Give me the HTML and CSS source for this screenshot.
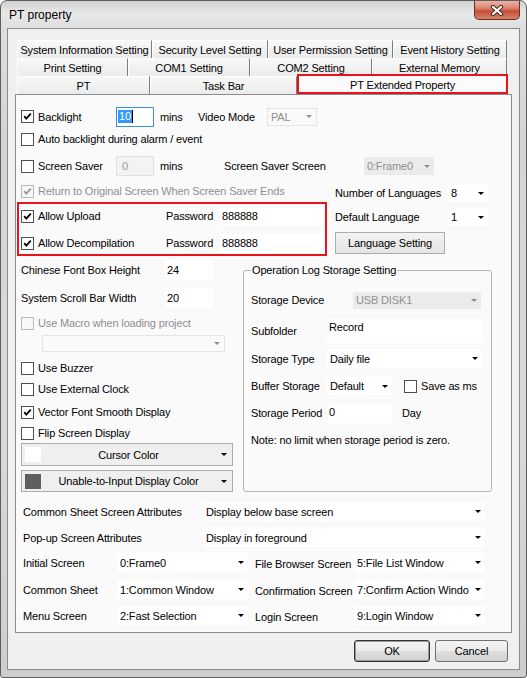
FILE: index.html
```html
<!DOCTYPE html>
<html>
<head>
<meta charset="utf-8">
<title>PT property</title>
<link rel="stylesheet" href="styles.css">
</head>
<body>
<div class="window">
  <div class="titlebar">
    <span class="title">PT property</span>
    <div class="close">
      <svg width="14" height="11" viewBox="0 0 14 11"><path d="M3 2 L11 9 M11 2 L3 9" stroke="#4a2a24" stroke-width="4.2" stroke-linecap="round"/><path d="M3 2 L11 9 M11 2 L3 9" stroke="#ffffff" stroke-width="2.2" stroke-linecap="round"/></svg>
    </div>
  </div>
  <div class="client">
    <div class="tabs">
      <div class="tabrow">
        <div class="tab w135">System Information Setting</div>
        <div class="tab w116">Security Level Setting</div>
        <div class="tab w125">User Permission Setting</div>
        <div class="tab w114">Event History Setting</div>
      </div>
      <div class="tabrow">
        <div class="tab w111">Print Setting</div>
        <div class="tab w122">COM1 Setting</div>
        <div class="tab w122">COM2 Setting</div>
        <div class="tab w135">External Memory</div>
      </div>
      <div class="tabrow last">
        <div class="tab w133">PT</div>
        <div class="tab w147">Task Bar</div>
        <div class="tab active w211">PT Extended Property</div>
      </div>
    </div>

    <div class="page">
      <div class="top">
        <div class="row pl5 h21">
          <label class="chk w95"><span class="box"><svg class="tick" viewBox="0 0 11 11"><path d="M2.2 5.2 L4.3 7.6 L8.8 2.6"/></svg></span>Backlight</label>
          <span class="field focus w38 h20"><span class="sel">10</span><span class="caret"></span></span>
          <span class="ml6 w38">mins</span>
          <span class="w69">Video Mode</span>
          <span class="combo ghost w50 h18"><span class="val">PAL</span></span>
        </div>
        <div class="row pl5 h22 mt1">
          <label class="chk"><span class="box"></span>Auto backlight during alarm / event</label>
        </div>
        <div class="row pl5 h20 mt6">
          <label class="chk w95"><span class="box"></span>Screen Saver</label>
          <span class="field off w38 h20">0</span>
          <span class="ml6 w64">mins</span>
          <span class="w140">Screen Saver Screen</span>
          <span class="combo off w70 h18"><span class="val">0:Frame0</span></span>
        </div>
        <div class="split mt5">
          <div class="leftcol">
            <div class="row pl5 h20">
              <label class="chk dis"><span class="box dis"><svg class="tick" viewBox="0 0 11 11"><path d="M2.2 5.2 L4.3 7.6 L8.8 2.6"/></svg></span>Return to Original Screen When Screen Saver Ends</label>
            </div>
            <div class="redbox">
              <div class="row h20 mt2">
                <label class="chk w145"><span class="box"><svg class="tick" viewBox="0 0 11 11"><path d="M2.2 5.2 L4.3 7.6 L8.8 2.6"/></svg></span>Allow Upload</label>
                <span class="w54">Password</span>
                <span class="field w103 h19">888888</span>
              </div>
              <div class="row h20 mt7">
                <label class="chk w145"><span class="box"><svg class="tick" viewBox="0 0 11 11"><path d="M2.2 5.2 L4.3 7.6 L8.8 2.6"/></svg></span>Allow Decompilation</label>
                <span class="w54">Password</span>
                <span class="field w103 h19">888888</span>
              </div>
            </div>
          </div>
          <div class="rightcol">
            <div class="row h18">
              <span class="w113">Number of Languages</span>
              <span class="combo w40 h17"><span class="val">8</span></span>
            </div>
            <div class="row h18 mt6">
              <span class="w113">Default Language</span>
              <span class="combo w40 h17"><span class="val">1</span></span>
            </div>
            <div class="pushbtn w110 h22 mt6">Language Setting</div>
          </div>
        </div>
      </div>

      <div class="mid">
        <div class="midleft">
          <div class="row h20">
            <span class="w144">Chinese Font Box Height</span>
            <span class="field w48 h20">24</span>
          </div>
          <div class="row h20 mt8">
            <span class="w144">System Scroll Bar Width</span>
            <span class="field w48 h20">20</span>
          </div>
          <div class="row h18 mt6">
            <label class="chk dis"><span class="box dis"></span>Use Macro when loading project</label>
          </div>
          <div class="combo ghost2 w183 h17 mt3 ml21"><span class="val"></span></div>
          <div class="row h18 mt7">
            <label class="chk"><span class="box"></span>Use Buzzer</label>
          </div>
          <div class="row h18 mt3">
            <label class="chk"><span class="box"></span>Use External Clock</label>
          </div>
          <div class="row h18 mt5">
            <label class="chk"><span class="box"><svg class="tick" viewBox="0 0 11 11"><path d="M2.2 5.2 L4.3 7.6 L8.8 2.6"/></svg></span>Vector Font Smooth Display</label>
          </div>
          <div class="row h18 mt3">
            <label class="chk"><span class="box"></span>Flip Screen Display</label>
          </div>
          <div class="colorbtn h23 mt1"><span class="swatch white"></span><span class="clabel">Cursor Color</span></div>
          <div class="colorbtn h22 mt4"><span class="swatch gray"></span><span class="clabel">Unable-to-Input Display Color</span></div>
        </div>

        <fieldset class="group">
          <legend>Operation Log Storage Setting</legend>
          <div class="row h18 mt14">
            <span class="w102">Storage Device</span>
            <span class="combo off w128 h17"><span class="val">USB DISK1</span></span>
          </div>
          <div class="row h24 mt10">
            <span class="w76">Subfolder</span>
            <span class="field top w156 h24">Record</span>
          </div>
          <div class="row h19 mt6">
            <span class="w76">Storage Type</span>
            <span class="combo w155 h19"><span class="val">Daily file</span></span>
          </div>
          <div class="row h18 mt9">
            <span class="w76">Buffer Storage</span>
            <span class="combo w65 h18"><span class="val">Default</span></span>
            <label class="chk ml12"><span class="box"></span>Save as ms</label>
          </div>
          <div class="row h20 mt8">
            <span class="w76">Storage Period</span>
            <span class="field top w65 h19">0</span>
            <span class="ml10">Day</span>
          </div>
          <div class="note mt10">Note: no limit when storage period is zero.</div>
        </fieldset>
      </div>

      <div class="bottom">
        <div class="row h19">
          <span class="w180">Common Sheet Screen Attributes</span>
          <span class="combo w282 h19"><span class="val">Display below base screen</span></span>
        </div>
        <div class="row h19 mt7">
          <span class="w180">Pop-up Screen Attributes</span>
          <span class="combo w282 h19"><span class="val">Display in foreground</span></span>
        </div>
        <div class="row h19 mt6">
          <span class="w94">Initial Screen</span>
          <span class="combo w131 h19"><span class="val">0:Frame0</span></span>
          <span class="ml7 w99 low">File Browser Screen</span>
          <span class="combo w131 h19"><span class="val">5:File List Window</span></span>
        </div>
        <div class="row h19 mt8">
          <span class="w94">Common Sheet</span>
          <span class="combo w131 h19"><span class="val">1:Common Window</span></span>
          <span class="ml7 w99 low">Confirmation Screen</span>
          <span class="combo w131 h19"><span class="val">7:Confirm Action Windo</span></span>
        </div>
        <div class="row h19 mt7">
          <span class="w94">Menu Screen</span>
          <span class="combo w131 h19"><span class="val">2:Fast Selection</span></span>
          <span class="ml7 w99 low">Login Screen</span>
          <span class="combo w131 h19"><span class="val">9:Login Window</span></span>
        </div>
      </div>
    </div>

    <div class="actions">
      <div class="btn default w76">OK</div>
      <div class="btn w73">Cancel</div>
    </div>
  </div>
</div>
</body>
</html>
```

FILE: styles.css
```css
* { box-sizing: border-box; }
html, body { margin: 0; padding: 0; background: #ffffff; }
body {
  font-family: "Liberation Sans", Arial, sans-serif;
  font-size: 11px;
  letter-spacing: -0.15px;
  color: #000;
}

.window {
  width: 527px;
  height: 678px;
  border: 1px solid #5e5e5e;
  border-radius: 7px 7px 3px 3px;
  background: linear-gradient(180deg, #d2d2d2 0, #e7e7e7 12px, #dedede 28px, #d4d4d4 140px, #dadada 420px, #cdcdcd 100%);
  display: flex;
  flex-direction: column;
  overflow: hidden;
}

.titlebar {
  height: 27px;
  flex: none;
  display: flex;
  align-items: flex-start;
}
.title {
  font-size: 12px;
  letter-spacing: 0;
  line-height: 28px;
  padding-left: 8px;
}
.close {
  margin-left: auto;
  margin-right: 6px;
  width: 46px;
  height: 19px;
  border: 1px solid #6b2d25;
  border-top: none;
  border-radius: 0 0 5px 5px;
  background: linear-gradient(180deg, #eab4a6 0, #d9846f 40%, #c64f39 56%, #d5826a 100%);
  display: flex;
  align-items: center;
  justify-content: center;
}

.client {
  flex: none;
  height: 642px;
  margin: 0 6px;
  border: 1px solid #8b8b8b;
  background: #f0f0f0;
  padding: 11px 0 0 7px;
}

/* tabs */
.tabs { margin-left: 2px; width: 492px; }
.tabrow { display: flex; height: 18px; }
.tabrow.last { align-items: flex-end; }
.tab {
  height: 18px;
  flex: none;
  display: flex;
  align-items: center;
  justify-content: center;
  white-space: nowrap;
  background: linear-gradient(180deg, #f8f8f8, #ebebeb);
  border-top: 1px solid #ffffff;
  border-left: 1px solid #ffffff;
  border-right: 1px solid #7d7d7d;
  padding-top: 1px;
}
.tab.active {
  height: 20px;
  background: #fbfbfb;
  border: 2px solid #e8141a;
  position: relative;
  z-index: 1;
}

.page {
  width: 497px;
  height: 539px;
  border: 1px solid #898c95;
  background: #fafafa;
}

/* generic rows */
.row { display: flex; align-items: center; white-space: nowrap; }
.pl5 { padding-left: 5px; }
.top { padding-top: 11px; }

.chk { display: flex; align-items: center; gap: 4px; white-space: nowrap; }
.box {
  width: 13px;
  height: 13px;
  flex: none;
  border: 1px solid #4f4f4f;
  background: #ffffff;
  display: flex;
  align-items: center;
  justify-content: center;
}
.tick { width: 11px; height: 11px; }
.tick path { fill: none; stroke: #000; stroke-width: 1.8; }
.dis { color: #8f8f8f; }
.box.dis { border-color: #b9b9b9; background: #f7f7f7; }
.box.dis .tick path { stroke: #9a9a9a; }

.field {
  background: #ffffff;
  display: flex;
  align-items: center;
  padding-left: 2px;
  flex: none;
}
.field.top { align-items: flex-start; padding-top: 2px; }
.field.focus { border: 1px solid #3b8ee5; padding-left: 1px; }
.field.off { background: #f3f3f3; border: 1px solid #e1e1e1; color: #9a9a9a; padding-left: 5px; }
.sel { background: #3399ff; color: #ffffff; padding: 0 1px; line-height: 13px; }
.caret { width: 1px; height: 13px; background: #000; }

.combo {
  display: flex;
  align-items: center;
  flex: none;
  background: #ffffff;
  padding-left: 3px;
  white-space: nowrap;
}
.combo .val { flex: 1; min-width: 0; overflow: hidden; }
.combo::after {
  content: "";
  flex: none;
  margin: 0 4px 0 5px;
  border-left: 3px solid transparent;
  border-right: 3px solid transparent;
  border-top: 3px solid #000;
}
.combo.off { background: #ebebeb; color: #8f8f8f; }
.combo.off::after { border-top-color: #8f8f8f; }
.combo.ghost { background: transparent; border: 1px dotted #d4d4d4; color: #8f8f8f; }
.combo.ghost::after { border-top-color: #8f8f8f; }
.combo.ghost2 { background: transparent; border: 1px solid #e4e4e4; }
.combo.ghost2::after { border-top-color: #8f8f8f; }

.split { display: flex; align-items: flex-start; }
.leftcol { width: 311px; flex: none; }
.redbox {
  margin: 1px 0 0 1px;
  width: 310px;
  height: 54px;
  border: 2px solid #e8141a;
  padding-left: 2px;
}
.rightcol { margin-left: 8px; padding-top: 3px; }

.pushbtn {
  display: flex;
  align-items: center;
  justify-content: center;
  border: 1px solid #acacac;
  background: linear-gradient(180deg, #f3f3f3, #e4e4e4);
}

.mid { display: flex; align-items: flex-start; margin-top: 4px; }
.midleft { width: 217px; flex: none; padding-left: 5px; }

.colorbtn {
  width: 212px;
  display: flex;
  align-items: center;
  border: 1px solid #acacac;
  background: #efefef;
  padding-left: 3px;
}
.colorbtn::after {
  content: "";
  flex: none;
  margin: 0 5px 0 5px;
  border-left: 3px solid transparent;
  border-right: 3px solid transparent;
  border-top: 3px solid #000;
}
.swatch { width: 16px; height: 15px; flex: none; }
.swatch.white { background: #ffffff; }
.swatch.gray { background: #5f5f5f; }
.clabel { flex: 1; text-align: center; }

.group {
  margin: 4px 0 0 10px;
  width: 249px;
  height: 228px;
  min-width: 0;
  border: 1px solid #b4b4b4;
  border-radius: 3px;
  padding: 0 7px;
}
.group legend { padding: 0 1px; line-height: 13px; }
.note { height: 14px; line-height: 14px; }

.bottom { margin-top: 10px; padding-left: 7px; }
.low { padding-top: 3px; }

.actions {
  display: flex;
  justify-content: flex-end;
  gap: 5px;
  margin-top: 7px;
  padding-right: 11px;
}
.btn {
  height: 22px;
  display: flex;
  align-items: center;
  justify-content: center;
  border: 1px solid #707070;
  border-radius: 3px;
  background: linear-gradient(180deg, #f4f4f4 0, #ececec 50%, #dedede 51%, #d2d2d2 100%);
}
.btn.default { border-color: #333333; box-shadow: inset 0 0 0 1px #9a9a9a; }

/* sizes */
.w38 { width: 38px; flex: none; } .w40 { width: 40px; } .w48 { width: 48px; }
.w50 { width: 50px; } .w54 { width: 54px; flex: none; } .w64 { width: 64px; flex: none; }
.w65 { width: 65px; } .w69 { width: 69px; flex: none; } .w70 { width: 70px; }
.w73 { width: 73px; } .w76 { width: 76px; flex: none; } .w94 { width: 94px; flex: none; }
.w95 { width: 95px; flex: none; } .w99 { width: 99px; flex: none; } .w102 { width: 102px; flex: none; }
.w103 { width: 103px; } .w110 { width: 110px; } .w111 { width: 111px; }
.w113 { width: 113px; flex: none; } .w114 { width: 114px; } .w116 { width: 116px; }
.w122 { width: 122px; } .w125 { width: 125px; } .w128 { width: 128px; }
.w131 { width: 131px; } .w133 { width: 133px; } .w135 { width: 135px; }
.w140 { width: 140px; flex: none; } .w144 { width: 144px; flex: none; } .w145 { width: 145px; flex: none; }
.w147 { width: 147px; } .w155 { width: 155px; } .w156 { width: 156px; }
.w180 { width: 180px; flex: none; } .w183 { width: 183px; } .w211 { width: 211px; }
.w282 { width: 282px; }
.h17 { height: 17px; } .h18 { height: 18px; } .h19 { height: 19px; } .h20 { height: 20px; }
.h21 { height: 21px; } .h22 { height: 22px; } .h23 { height: 23px; } .h24 { height: 24px; }
.mt1 { margin-top: 1px; } .mt2 { margin-top: 2px; } .mt3 { margin-top: 3px; } .mt4 { margin-top: 4px; }
.mt5 { margin-top: 5px; } .mt6 { margin-top: 6px; } .mt7 { margin-top: 7px; } .mt8 { margin-top: 8px; }
.mt9 { margin-top: 9px; } .mt10 { margin-top: 10px; } .mt14 { margin-top: 14px; }
.ml6 { margin-left: 6px; } .ml7 { margin-left: 7px; } .ml10 { margin-left: 10px; }
.ml12 { margin-left: 12px; } .ml21 { margin-left: 21px; }
```
